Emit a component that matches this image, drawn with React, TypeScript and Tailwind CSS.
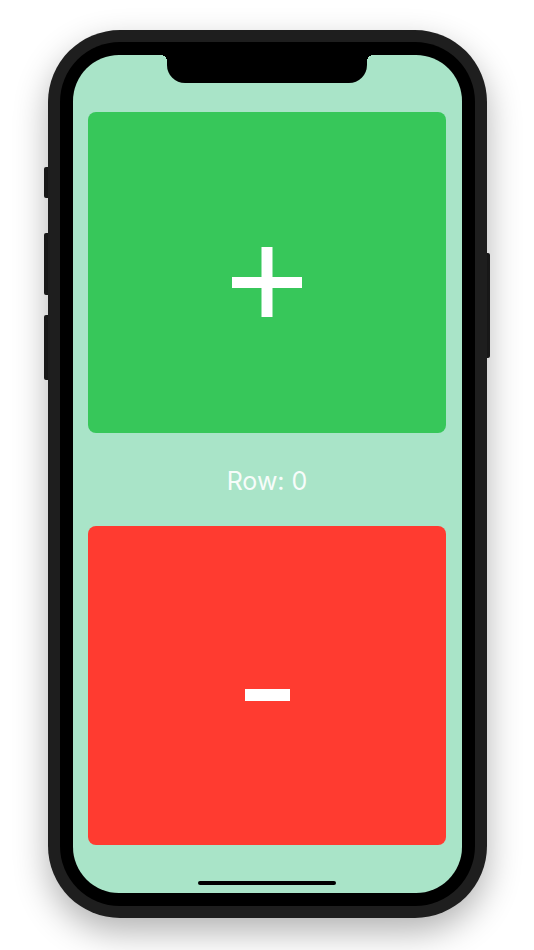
export default function App() {
  return (
    <div className="w-[534px] h-[950px] bg-white pt-[30px] pl-[48px]" style={{ fontFamily: 'Inter, "Noto Sans", sans-serif' }}>
      <div className="relative w-[439px] h-[888px]">
        {/* side buttons */}
        <div className="absolute left-[-4px] top-[137px] w-[5px] h-[31px] rounded-l-[2px] bg-[#1c1c1c]"></div>
        <div className="absolute left-[-4px] top-[203px] w-[5px] h-[62px] rounded-l-[2px] bg-[#1c1c1c]"></div>
        <div className="absolute left-[-4px] top-[285px] w-[5px] h-[65px] rounded-l-[2px] bg-[#1c1c1c]"></div>
        <div className="absolute right-[-3px] top-[223px] w-[5px] h-[105px] rounded-r-[2px] bg-[#1c1c1c]"></div>

        <div className="relative w-full h-full rounded-[72px] bg-[#1e1e1e] p-[12px] shadow-[0_14px_34px_rgba(0,0,0,0.3)]">
          <div className="w-full h-full rounded-[60px] bg-black p-[13px]">
            <div className="relative w-full h-full rounded-[46px] bg-[#a9e4c8] overflow-hidden flex flex-col pt-[57px] pb-[48px] pl-[15px] pr-[16px]">
              {/* notch */}
              <div className="absolute left-[94px] top-0 w-[200px] h-[28px] bg-black rounded-b-[18px]"></div>
              <div className="absolute left-[88px] top-0 w-[6px] h-[6px] bg-[radial-gradient(circle_at_0_100%,transparent_6px,black_6px)]"></div>
              <div className="absolute left-[294px] top-0 w-[6px] h-[6px] bg-[radial-gradient(circle_at_100%_100%,transparent_6px,black_6px)]"></div>

              <button className="h-[322px] w-full rounded-[8px] bg-[#37c75a] flex items-center justify-center">
                <svg width="70" height="70" viewBox="0 0 70 70" className="mt-[18px]">
                  <rect x="0" y="30" width="70" height="11" fill="white" />
                  <rect x="29.5" y="0" width="11" height="70" fill="white" />
                </svg>
              </button>

              <div className="h-[93px] flex items-center justify-center pt-[4px] text-[#f7fcfa] text-[25px] font-normal leading-none">
                Row: 0
              </div>

              <button className="h-[320px] w-full rounded-[8px] bg-[#ff3b30] flex items-center justify-center">
                <div className="w-[45px] h-[12px] bg-white mt-[20px]"></div>
              </button>

              {/* home indicator */}
              <div className="absolute left-[125px] bottom-[8px] w-[138px] h-[4px] rounded-full bg-black"></div>
            </div>
          </div>
        </div>
      </div>
    </div>
  );
}
